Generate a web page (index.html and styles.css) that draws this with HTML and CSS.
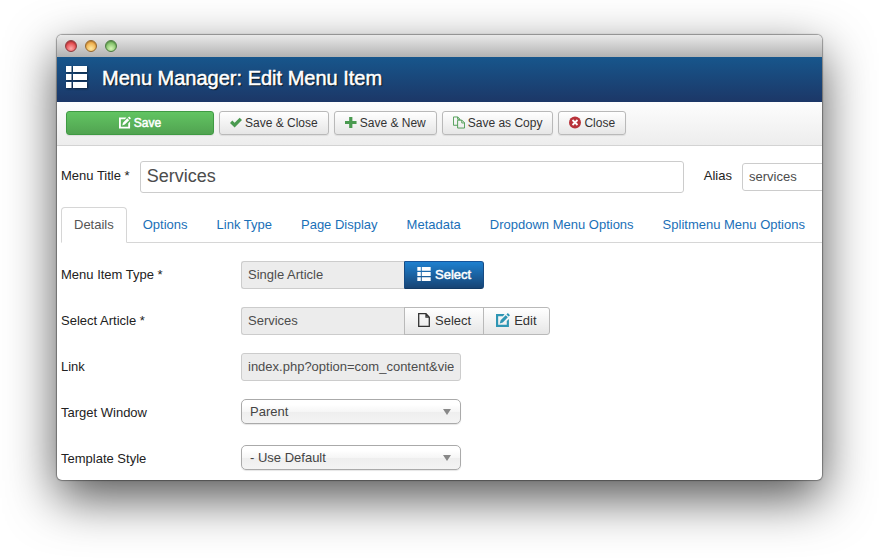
FILE: index.html
```html
<!DOCTYPE html>
<html lang="en">
<head>
<meta charset="utf-8">
<title>Menu Manager: Edit Menu Item</title>
<link rel="stylesheet" href="styles.css">
</head>
<body>
<svg class="sprite" aria-hidden="true">
  <symbol id="list" viewBox="0 0 21 22"><path d="M0 0h5.500v6H0zM7 0h14v6H7zM0 8h5.500v6H0zM7 8h14v6H7zM0 16h5.500v6H0zM7 16h14v6H7z"/></symbol>
  <symbol id="edit" viewBox="0 0 13 13"><path d="M0 1h8L6.500 3H2v8h8V7.500l2-2V13H0z"/><path d="M3.500 9.700l.8-3L9 2l2 2-4.700 4.800zM9.700 1.300L11 0l2 2-1.300 1.300z"/></symbol>
  <symbol id="check" viewBox="0 0 13 12"><path d="M0 6.500L2.500 3.800 5 6.300 10.500 .8 13 3.300 5 11.300z"/></symbol>
  <symbol id="plus" viewBox="0 0 13 12"><path d="M4.500 0h3.500v4.300h4.500v3.400H8V12H4.500V7.700H0V4.300h4.500z"/></symbol>
  <symbol id="copy" viewBox="0 0 13 13"><path d="M5 9.500H.5v-9h4.700L7.500 3v1M5 .5V3h2.500M5 4h4.700l2.800 2.800v5.700H5zM9.500 4v3h3" fill="none" stroke="currentColor"/></symbol>
  <symbol id="cancel" viewBox="0 0 12 12"><circle cx="6" cy="6" r="6"/><path d="M3.500 3.500l5 5M8.500 3.500l-5 5" stroke="#fff" stroke-width="1.800"/></symbol>
  <symbol id="file" viewBox="0 0 12 14"><path d="M.7.700h7.300l3.300 3.500v9.100H.7zM8 .7v3.500h3.300" fill="none" stroke="currentColor" stroke-width="1.300"/></symbol>
</svg>
<div class="window">
  <div class="titlebar"><span class="light red"></span><span class="light amber"></span><span class="light green"></span></div>
  <header class="header">
    <svg class="header-icon"><use href="#list"/></svg>
    <h1>Menu Manager: Edit Menu Item</h1>
  </header>
  <div class="toolbar">
    <button type="button" class="btn btn-small btn-success"><svg class="icon"><use href="#edit"/></svg>Save</button>
    <button type="button" class="btn btn-small"><svg class="icon is-green"><use href="#check"/></svg>Save &amp; Close</button>
    <button type="button" class="btn btn-small"><svg class="icon is-green"><use href="#plus"/></svg>Save &amp; New</button>
    <button type="button" class="btn btn-small"><svg class="icon is-green"><use href="#copy"/></svg>Save as Copy</button>
    <button type="button" class="btn btn-small"><svg class="icon is-red"><use href="#cancel"/></svg>Close</button>
  </div>
  <form class="form">
    <div class="title-row">
      <label for="title">Menu Title *</label>
      <input class="field title-field" id="title" type="text" value="Services">
      <label for="alias">Alias</label>
      <input class="field alias-field" id="alias" type="text" value="services">
    </div>
    <nav class="tabs">
      <a class="tab active" href="#details">Details</a>
      <a class="tab" href="#options">Options</a>
      <a class="tab" href="#link-type">Link Type</a>
      <a class="tab" href="#page-display">Page Display</a>
      <a class="tab" href="#metadata">Metadata</a>
      <a class="tab" href="#dropdown">Dropdown Menu Options</a>
      <a class="tab" href="#splitmenu">Splitmenu Menu Options</a>
    </nav>
    <div class="rows" id="details">
      <div class="row">
        <label for="type">Menu Item Type *</label>
        <div class="group">
          <input class="field" id="type" type="text" value="Single Article" readonly>
          <button type="button" class="btn btn-primary"><svg class="icon"><use href="#list"/></svg>Select</button>
        </div>
      </div>
      <div class="row">
        <label for="article">Select Article *</label>
        <div class="group">
          <input class="field" id="article" type="text" value="Services" readonly>
          <button type="button" class="btn"><svg class="icon"><use href="#file"/></svg>Select</button>
          <button type="button" class="btn"><svg class="icon is-teal"><use href="#edit"/></svg>Edit</button>
        </div>
      </div>
      <div class="row">
        <label for="link">Link</label>
        <input class="field" id="link" type="text" value="index.php?option=com_content&amp;view=article" readonly>
      </div>
      <div class="row">
        <label for="target">Target Window</label>
        <div class="select"><select id="target"><option>Parent</option></select></div>
      </div>
      <div class="row">
        <label for="style">Template Style</label>
        <div class="select"><select id="style"><option>- Use Default</option></select></div>
      </div>
    </div>
  </form>
</div>
</body>
</html>
```
FILE: styles.css
```css
* { box-sizing: border-box; }
body {
  margin: 0;
  padding: 35px 57px 79px;
  background: #fff;
  color: #222;
  font: 13px/18px "Liberation Sans", Arial, sans-serif;
}
button, input, select { font: inherit; margin: 0; }
.sprite { position: absolute; width: 0; height: 0; }
.window {
  overflow: hidden;
  border-radius: 5px;
  background: #fff;
  box-shadow: 0 0 1px 1px rgba(0, 0, 0, .35), 0 18px 50px rgba(0, 0, 0, .68);
}
.titlebar {
  display: flex;
  align-items: center;
  gap: 8px;
  height: 22px;
  padding-left: 8px;
  background: linear-gradient(#e9e9e9, #b2b2b2);
}
.light {
  width: 12px;
  height: 12px;
  border: 1px solid;
  border-radius: 50%;
}
.red { background: radial-gradient(circle at 50% 75%, #ffa9a9, #e2474c 65%); border-color: #8e3a3d; box-shadow: inset 0 1px 1px #a2373a; }
.amber { background: radial-gradient(circle at 50% 75%, #ffe9a0, #eeae4c 65%); border-color: #94672d; box-shadow: inset 0 1px 1px #b27a35; }
.green { background: radial-gradient(circle at 50% 75%, #d5f6b5, #80c068 65%); border-color: #4c7a40; box-shadow: inset 0 1px 1px #578a49; }
.header {
  display: flex;
  align-items: center;
  gap: 15px;
  height: 45px;
  padding: 0 9px 3px;
  background: linear-gradient(#17568c, #1c3767);
  color: #fff;
}
.header-icon {
  width: 21px;
  height: 22px;
  margin-bottom: 2px;
  fill: #fff;
  filter: drop-shadow(1px 1px 1px rgba(0, 0, 0, .5));
}
.header h1 {
  margin: 0;
  font-size: 20px;
  line-height: 24px;
  font-weight: normal;
  -webkit-text-stroke: 0.5px #fff;
  text-shadow: 1px 1px 1px rgba(0, 0, 0, .9);
}
.toolbar {
  display: flex;
  gap: 5px;
  padding: 9px 9px 10px;
  border-bottom: 1px solid #d3d3d3;
  background: linear-gradient(#fdfdfd, #ededed);
}
.btn {
  display: flex;
  align-items: center;
  justify-content: center;
  gap: 4px;
  height: 28px;
  padding: 0 12px;
  border: 1px solid #b9b9b9;
  border-radius: 3px;
  background: linear-gradient(#fff, #e6e6e6);
  color: #333;
  white-space: nowrap;
}
.btn-small {
  height: 24px;
  padding: 0 10px;
  gap: 3px;
  font-size: 12px;
  box-shadow: 0 1px 1px rgba(0, 0, 0, .08);
}
.btn-success {
  min-width: 148px;
  border-color: #3f9a43;
  background: linear-gradient(#62c462, #51a351);
  color: #fff;
  -webkit-text-stroke: 0.5px #fff;
}
.btn-primary {
  border-color: #15549a #174b82 #123a64;
  background: linear-gradient(#1e80cf, #174474);
  color: #fff;
  -webkit-text-stroke: 0.5px #fff;
}
.icon {
  width: 13px;
  height: 13px;
  margin-bottom: 2px;
  fill: currentColor;
  stroke: none;
  flex: none;
}
.btn-small .icon { width: 12px; }
.group .icon { width: 14px; height: 14px; }
.is-green { color: #4a9a50; }
.is-red { color: #b8323a; }
.is-teal { color: #2f96b4; }
.form { padding: 15px 0 7px 4px; }
.title-row {
  display: flex;
  align-items: center;
  height: 32px;
}
.title-row label { flex: none; margin-bottom: 3px; }
.field {
  width: 220px;
  height: 28px;
  padding: 0 6px 2px;
  border: 1px solid #ccc;
  border-radius: 3px;
  background: #fff;
  color: #4c4c4c;
}
.field:read-only { background: #ececec; }
.title-field {
  flex: 1;
  min-width: 0;
  height: 32px;
  margin: 0 20px 0 10px;
  font-size: 18px;
}
.alias-field {
  flex: none;
  width: 90px;
  margin: 0 -10px 0 10px;
}
.tabs {
  display: flex;
  gap: 3px;
  margin-top: 14px;
  border-bottom: 1px solid #d6d6d6;
}
.tab {
  flex: none;
  height: 35px;
  padding: 8px 12px;
  border: 1px solid transparent;
  color: #1a70b8;
  text-decoration: none;
}
.tab.active {
  height: 36px;
  margin-bottom: -1px;
  border-color: #d6d6d6 #d6d6d6 #fff;
  border-radius: 4px 4px 0 0;
  background: #fff;
  color: #555;
}
.rows {
  display: flex;
  flex-direction: column;
  gap: 18px;
  margin-top: 18px;
}
.row {
  display: grid;
  grid-template-columns: 180px 1fr;
  align-items: center;
  min-height: 28px;
}
.group { display: flex; }
.group .field {
  width: 163px;
  border-right: 0;
  border-radius: 3px 0 0 3px;
}
.group .btn { border-radius: 0; }
.group .btn + .btn { margin-left: -1px; }
.group .btn:last-child { border-radius: 0 3px 3px 0; }
.select {
  position: relative;
  align-self: start;
  width: 220px;
}
.select select {
  display: block;
  width: 100%;
  height: 25px;
  padding: 0 24px 0 8px;
  border: 1px solid #aaa;
  border-radius: 5px;
  appearance: none;
  background: linear-gradient(#fff 20%, #f6f6f6 50%, #eee 52%, #f4f4f4);
  color: #444;
  box-shadow: 0 1px 1px rgba(0, 0, 0, .1);
}
.select::after {
  content: "";
  position: absolute;
  top: 10px;
  right: 10px;
  border: solid transparent;
  border-width: 6px 4px 0;
  border-top-color: #888;
  pointer-events: none;
}
```
